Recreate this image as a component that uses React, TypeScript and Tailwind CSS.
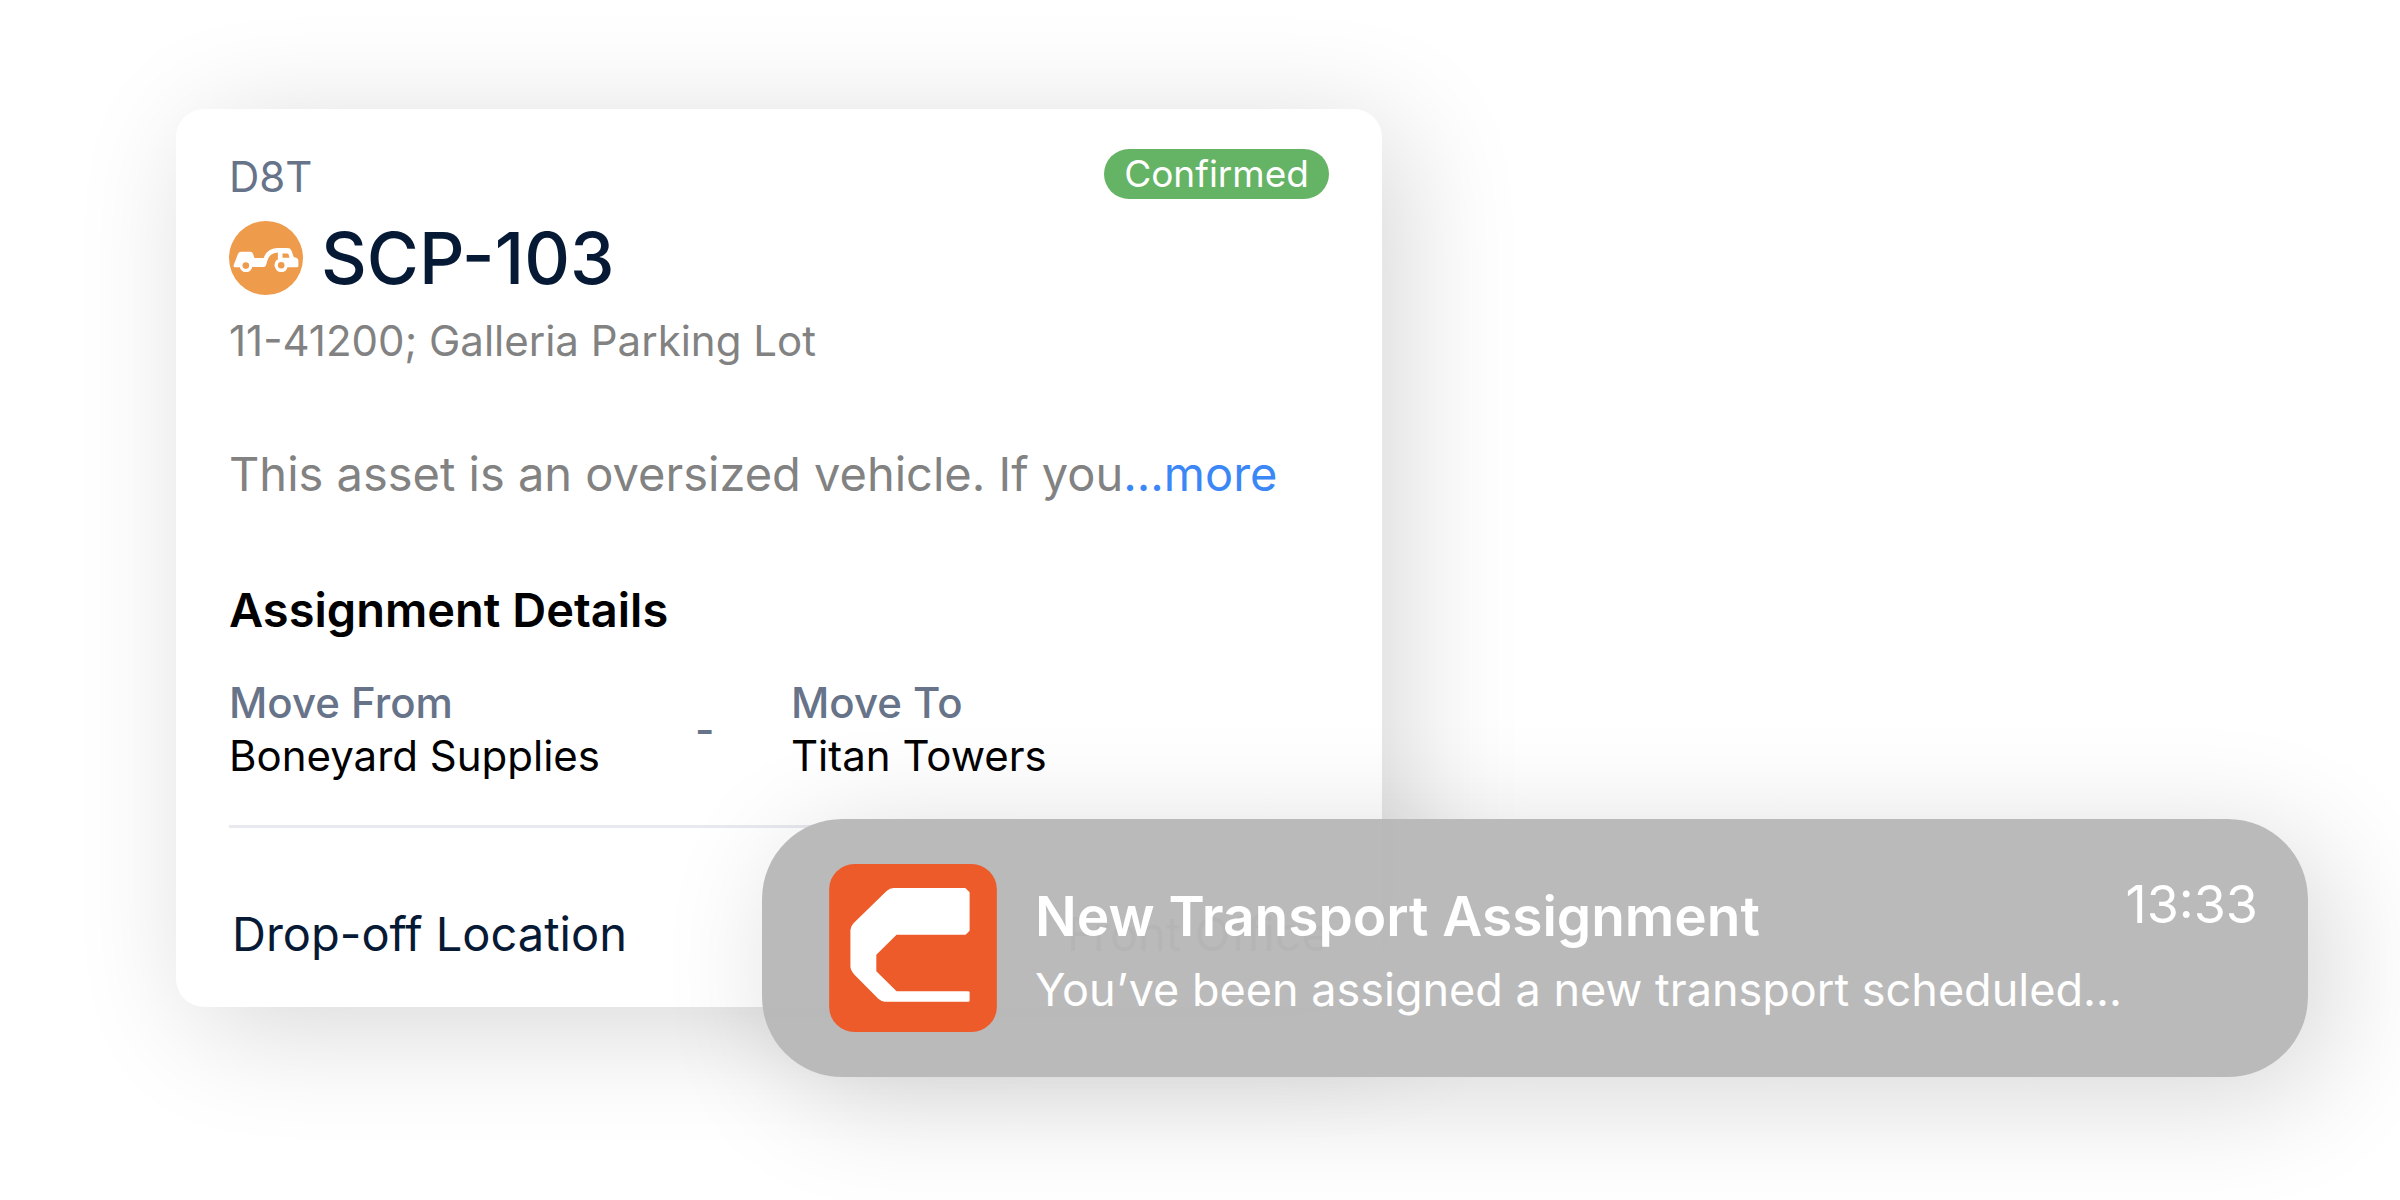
import React from 'react';

interface StopProps {
  label: string;
  value: string;
}

function TowIcon() {
  return (
    <svg viewBox="55 32 224 224" className="size-[74px] shrink-0" aria-hidden="true">
      <circle cx="167" cy="144" r="112" fill="#ee9b4c" />
      {/* towed car and bed */}
      <path
        fill="#fff"
        d="M69 166 L82 132 Q85 125 92 125 H119 Q126 125 128 132 L132 144 H160 Q170 116 200 114 H232 Q241 114 244 121 L251 141 L260 144 Q265 146 265 151 V168 Q265 172 261 172 H232 A19 19 0 0 1 195 172 L189 166 Q190 151 203 148 V128 Q180 129 173 147 Q170 156 167 166 Q166 171 160 171 H125 A19 19 0 0 1 88 172 H74 Q67 172 69 166 Z"
      />
      <path fill="#ee9b4c" d="M203 128 Q180 129 173 149 L169 170 Q168 172 165 174 L193 174 Q191 151 206 146 Z" />
      <path fill="#fff" d="M203 127 H208 V150 H203 Z" />
      <path fill="#ee9b4c" d="M217 130 H231 Q234 130 235 133 L238 143 H217 Z" />
      <circle cx="106" cy="167" r="19" fill="#fff" />
      <circle cx="213" cy="166" r="19" fill="#fff" />
      <circle cx="106" cy="167" r="10" fill="#ee9b4c" />
      <circle cx="213" cy="166" r="10" fill="#ee9b4c" />
    </svg>
  );
}

function AppLogo() {
  return (
    <svg viewBox="89 71 505 506" className="size-[168px] shrink-0" role="img" aria-label="App logo">
      <rect x="89" y="71" width="505" height="506" rx="76" fill="#ec5b29" />
      <path
        fill="#fff"
        d="M283 143 H499 L512 156 V272 L500 284 H292 L231 344 V394 L292 454 H508 Q512 454 512 458 V482 Q512 486 508 486 H256 Q246 485 237 477 L166 405 Q154 392 153 381 V270 Q154 258 163 249 L262 152 Q272 143 283 143 Z"
      />
    </svg>
  );
}

function Stop({ label, value }: StopProps) {
  return (
    <div className="text-[42px] leading-[53px]">
      <dt className="font-medium text-[#667389]">{label}</dt>
      <dd className="text-black">{value}</dd>
    </div>
  );
}

function AssignmentCard() {
  return (
    <article className="w-[1206px] max-w-full rounded-[28px] bg-white px-[53px] pt-10 pb-[43px] shadow-[20px_20px_120px_rgba(0,0,0,0.16)]">
      <div className="flex items-start justify-between">
        <p className="pt-1 text-[42px] leading-[48px] text-[#667389]">D8T</p>
        <span className="rounded-full bg-[#65b364] px-5 text-[37px] leading-[50px] text-white">Confirmed</span>
      </div>

      <div className="mt-5 flex items-center gap-[18px]">
        <TowIcon />
        <h1 className="text-[71px] leading-[74px] font-medium text-[#071a35]">SCP-103</h1>
      </div>
      <p className="mt-5 text-[42px] leading-[52px] text-[#828282]">11-41200; Galleria Parking Lot</p>

      <p className="mt-[77px] text-[47px] leading-[60px] text-[#828282]">
        This asset is an oversized vehicle. If you
        <a href="#more" className="text-[#3b87f7]">...more</a>
      </p>

      <h2 className="mt-[76px] text-[47px] leading-[60px] font-semibold text-black">Assignment Details</h2>
      <dl className="mt-9 grid grid-cols-[466px_96px_1fr]">
        <Stop label="Move From" value="Boneyard Supplies" />
        <div className="self-center text-[42px] leading-[53px] font-medium text-[#667389]" aria-hidden="true">-</div>
        <Stop label="Move To" value="Titan Towers" />
      </dl>

      <hr className="mt-[43px] border-t-[3px] border-[#e9eaef]" />
      <div className="mt-[76px] flex items-center justify-between pl-[3px] text-[47px] leading-[60px]">
        <span className="text-[#071a35]">Drop-off Location</span>
        <span className="text-[#828282]">Front Office</span>
      </div>
    </article>
  );
}

function PushNotification() {
  return (
    <aside className="relative z-10 -mt-[188px] ml-auto flex w-[1546px] max-w-full items-start rounded-[80px] bg-[#b7b7b7]/96 py-[45px] pr-[50px] pl-[67px] text-white shadow-[20px_20px_120px_rgba(0,0,0,0.16)]">
      <AppLogo />
      <div className="ml-[38px] flex-1 pt-4">
        <div className="flex items-start justify-between">
          <h2 className="text-[55px] leading-[72px] font-semibold">New Transport Assignment</h2>
          <time className="text-[52px] leading-[50px]">13:33</time>
        </div>
        <p className="mt-0.5 text-[45px] leading-[72px]">You’ve been assigned a new transport scheduled...</p>
      </div>
    </aside>
  );
}

export default function App() {
  return (
    <main className="min-h-screen overflow-hidden bg-white pt-[109px] pr-[92px] pb-[123px] pl-44 font-['Inter',sans-serif]">
      <AssignmentCard />
      <PushNotification />
    </main>
  );
}
